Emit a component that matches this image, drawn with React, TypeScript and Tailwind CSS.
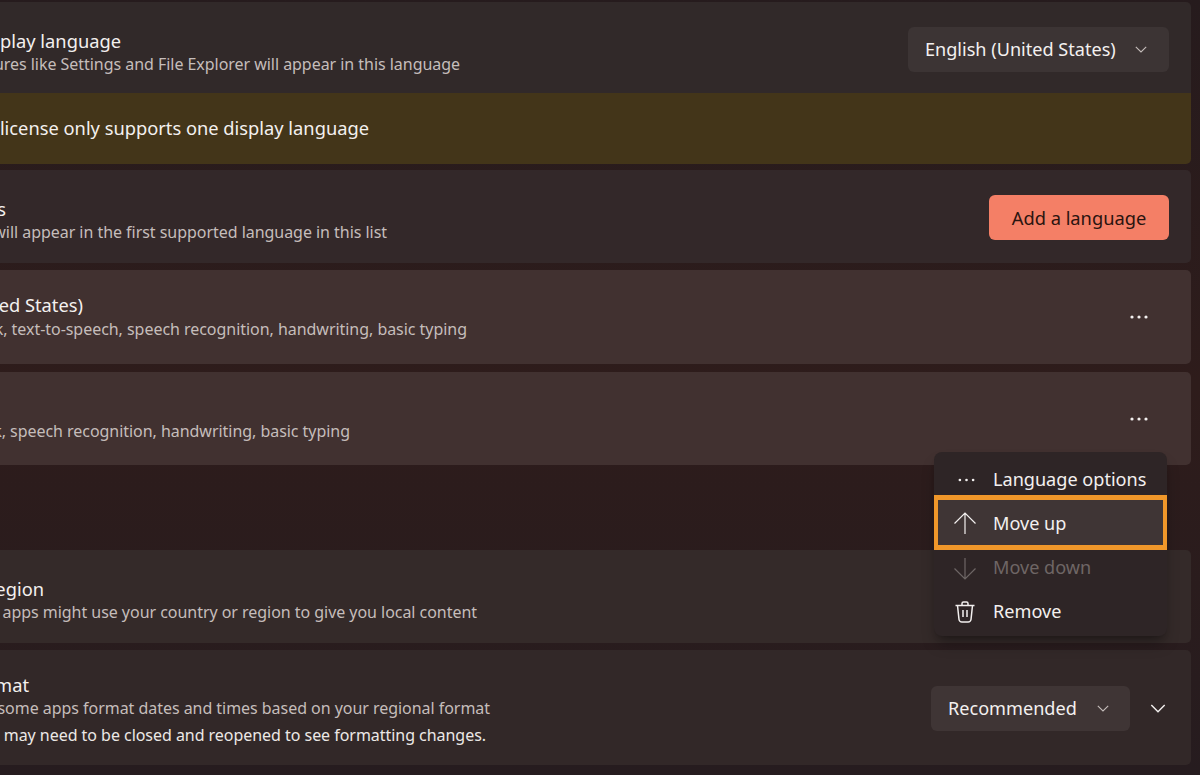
import React from "react";

function Dots({ className, r = 1.6 }: { className: string; r?: number }) {
  return (
    <svg viewBox="0 0 18 4" className={className} fill="currentColor">
      <circle cx="2" cy="2" r={r} />
      <circle cx="9" cy="2" r={r} />
      <circle cx="16" cy="2" r={r} />
    </svg>
  );
}

function Chevron({ className }: { className: string }) {
  return (
    <svg viewBox="0 0 12 7" className={className} fill="none" stroke="currentColor" strokeWidth="1.1">
      <path d="M0.8 0.8 L6 6 L11.2 0.8" />
    </svg>
  );
}

function Line({ end, className, children }: { end: string; className: string; children: React.ReactNode }) {
  return (
    <div className={`flex justify-end ${end}`}>
      <div className={`shrink-0 whitespace-nowrap ${className}`}>{children}</div>
    </div>
  );
}

const title = "text-[18.3px] leading-[24px] text-[#f3f0ef]";
const sub = "text-[16px] leading-[22px] tracking-[-0.04px] text-[#c5bdbb]";
const control = "text-[18.1px] text-[#f3f0ef]";

export default function App() {
  return (
    <div className="relative h-[775px] w-[1200px] overflow-hidden bg-gradient-to-b from-[#261b1d] via-[#2e1c1b] to-[#261c1f] font-['Noto_Sans',sans-serif]">
      <div className="ml-[-10px] flex flex-col pt-[2px] pr-[9px]">
        <div className="flex h-[91px] items-center justify-between rounded-t-[5px] bg-[#312929] pl-[10px] pr-[22px]">
          <div className="pt-[8px]">
            <Line end="w-[121px]" className={title}>Windows display language</Line>
            <Line end="w-[460px]" className={sub}>Windows features like Settings and File Explorer will appear in this language</Line>
          </div>
          <button className={`mt-[4px] flex h-[45px] w-[261px] items-center justify-between rounded-[6px] bg-[#3c3434] pl-[17px] pr-[22px] ${control}`}>
            English (United States)
            <Chevron className="h-[7px] w-[12px] text-[#c5bdbb]" />
          </button>
        </div>
        <div className="flex h-[71px] items-center rounded-b-[5px] bg-[#433519] pb-[2px] pl-[10px]">
          <Line end="w-[369px]" className={title}>Your Windows license only supports one display language</Line>
        </div>

        <div className="mt-[6px] flex h-[93px] items-center justify-between rounded-[5px] bg-[#332829] pl-[10px] pr-[22px]">
          <div className="pt-[6px]">
            <Line end="w-[6px]" className={title}>Preferred languages</Line>
            <Line end="w-[387px]" className={sub}>Microsoft Store apps will appear in the first supported language in this list</Line>
          </div>
          <button className="mt-[2px] h-[45px] w-[180px] rounded-[6px] bg-[#f47f66] text-[18.3px] text-[#2a1410]">Add a language</button>
        </div>

        <div className="mt-[7px] flex h-[94px] items-center justify-between rounded-[5px] bg-[#413130] pl-[10px] pr-[43px]">
          <div className="pt-[1px]">
            <Line end="w-[83px] mt-[-2px]" className={title}>English (United States)</Line>
            <Line end="w-[467px] mt-[1px]" className={sub}>Language pack, text-to-speech, speech recognition, handwriting, basic typing</Line>
          </div>
          <Dots className="h-[4px] w-[18px] text-[#f3f0ef]" />
        </div>

        <div className="mt-[8px] flex h-[93px] items-center justify-between rounded-[5px] bg-[#413130] pl-[10px] pr-[43px]">
          <div className="pt-[24px]">
            <Line end="w-[350px]" className={sub}>Language pack, speech recognition, handwriting, basic typing</Line>
          </div>
          <Dots className="h-[4px] w-[18px] text-[#f3f0ef]" />
        </div>

        <div className="mt-[85px] flex h-[93px] items-center rounded-[5px] bg-[#342a29] pl-[10px]">
          <div className="pt-[6px]">
            <Line end="w-[44px]" className={title}>Country or region</Line>
            <Line end="w-[477px]" className={sub}>Windows and apps might use your country or region to give you local content</Line>
          </div>
        </div>

        <div className="mt-[7px] flex h-[115px] items-center justify-between rounded-[5px] bg-[#322828] pl-[10px] pr-[25px]">
          <div className="pt-[3px]">
            <Line end="w-[29px]" className={title}>Regional format</Line>
            <Line end="w-[490px]" className={sub}>Windows and some apps format dates and times based on your regional format</Line>
            <Line end="w-[486px] mt-[5px]" className="text-[16px] leading-[22px] tracking-[-0.04px] text-[#ece8e6]">Some apps may need to be closed and reopened to see formatting changes.</Line>
          </div>
          <div className="mt-[2px] flex items-center gap-[20px]">
            <button className={`flex h-[45px] w-[199px] items-center justify-between rounded-[6px] bg-[#3f3535] pl-[17px] pr-[21px] ${control}`}>
              Recommended
              <Chevron className="h-[7px] w-[12px] text-[#c5bdbb]" />
            </button>
            <Chevron className="h-[9px] w-[16px] text-[#f3f0ef]" />
          </div>
        </div>
      </div>

      <div className={`absolute left-[934px] top-[452px] w-[233px] rounded-[8px] bg-[#2e2526] pt-[6px] pb-[2px] shadow-lg shadow-black/30 ${control}`}>
        <div className="flex h-[44px] items-center pl-[20px]">
          <span className="flex w-[24px] justify-center">
            <Dots className="h-[4px] w-[17px]" r={1.4} />
          </span>
          <span className="ml-[15px]">Language options</span>
        </div>
        <div className="relative flex h-[44px] items-center pl-[19px]">
          <div className="absolute inset-x-0 top-[-7px] bottom-[-4px] border-x-[4px] border-y-[5px] border-[#f0972a] bg-[#3f3535]" />
          <svg viewBox="0 0 24 22" className="relative mt-[-2px] h-[22px] w-[24px]" fill="none" stroke="currentColor" strokeWidth="1.2">
            <path d="M12 1 V22 M1.5 11.5 L12 1 L22.5 11.5" />
          </svg>
          <span className="relative ml-[16px]">Move up</span>
        </div>
        <div className="flex h-[44px] items-center pl-[19px] text-[#6e6665]">
          <svg viewBox="0 0 24 22" className="mt-[2px] h-[22px] w-[24px]" fill="none" stroke="currentColor" strokeWidth="1.2">
            <path d="M12 0 V21 M1.5 10.5 L12 21 L22.5 10.5" />
          </svg>
          <span className="ml-[16px]">Move down</span>
        </div>
        <div className="flex h-[44px] items-center pl-[19px]">
          <svg viewBox="0 0 24 22" className="h-[22px] w-[24px]" fill="none" stroke="currentColor" strokeWidth="1.5">
            <path d="M2.5 4.5 H21.5 M9 4.5 V2.5 A1.5 1.5 0 0 1 10.5 1 H13.5 A1.5 1.5 0 0 1 15 2.5 V4.5 M4.5 4.5 L6 18.5 A3 3 0 0 0 9 21 H15 A3 3 0 0 0 18 18.5 L19.5 4.5 M10 9 V16 M14 9 V16" />
          </svg>
          <span className="ml-[16px]">Remove</span>
        </div>
      </div>
    </div>
  );
}
